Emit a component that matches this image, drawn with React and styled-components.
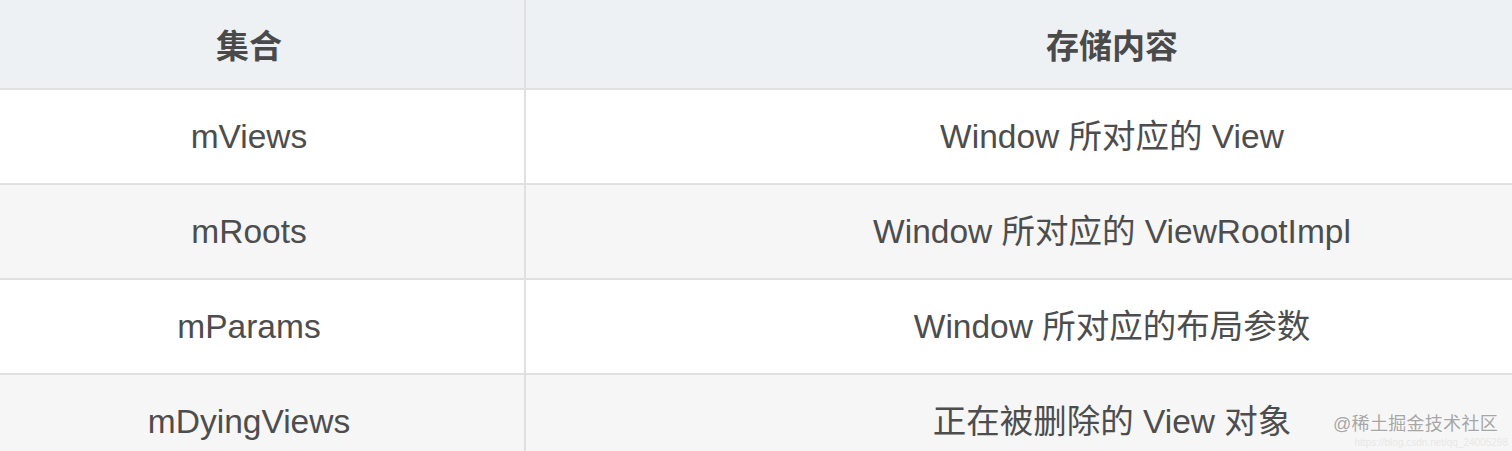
import React from 'react'
import styled, { createGlobalStyle } from 'styled-components'

const GlobalStyle = createGlobalStyle`
  body {
    margin: 0;
    background: #ffffff;
  }
`

const rows = [
  { name: 'mViews', content: 'Window 所对应的 View' },
  { name: 'mRoots', content: 'Window 所对应的 ViewRootImpl' },
  { name: 'mParams', content: 'Window 所对应的布局参数' },
  { name: 'mDyingViews', content: '正在被删除的 View 对象' },
]

const Frame = styled.div`
  position: relative;
  width: 1512px;
  height: 451px;
  overflow: hidden;
  font-family: "Liberation Sans", "Noto Sans CJK SC", sans-serif;
`

const Table = styled.div`
  display: grid;
  grid-template-columns: 550px 1172px;
  grid-auto-rows: 93px;
  grid-template-rows: 88px;
  gap: 2px;
  width: 1724px;
  margin-left: -26px;
  background: #e0e0e0;
`

const HeadCell = styled.div`
  display: flex;
  align-items: center;
  justify-content: center;
  padding-top: 6px;
  box-sizing: border-box;
  background: #eef1f4;
  color: #4a4a4a;
  font-size: 33px;
  line-height: 40px;
  font-weight: 700;
`

const Cell = styled.div`
  display: flex;
  align-items: center;
  justify-content: center;
  background: ${p => (p.$striped ? '#f6f6f6' : '#ffffff')};
  color: #4d4d4d;
  font-size: 33.5px;
  line-height: 40px;
`

const Watermark = styled.div`
  position: absolute;
  right: 14px;
  bottom: 2px;
  display: flex;
  flex-direction: column;
  align-items: flex-end;
  pointer-events: none;
`

const MarkTitle = styled.span`
  font-size: 18px;
  line-height: 22px;
  color: #a6a6a6;
  letter-spacing: 0.3px;
  text-shadow: 0 0 2px #ffffff;
`

const MarkUrl = styled.span`
  margin-top: 2px;
  margin-right: -10px;
  font-size: 10px;
  line-height: 12px;
  color: #e8e8e8;
`

const App = () => {
  return (
    <Frame>
      <GlobalStyle />
      <Table>
        <HeadCell>集合</HeadCell>
        <HeadCell>存储内容</HeadCell>
        {rows.map((row, i) => (
          <React.Fragment key={row.name}>
            <Cell $striped={i % 2 === 1}>{row.name}</Cell>
            <Cell $striped={i % 2 === 1}>{row.content}</Cell>
          </React.Fragment>
        ))}
      </Table>
      <Watermark>
        <MarkTitle>@稀土掘金技术社区</MarkTitle>
        <MarkUrl>https://blog.csdn.net/qq_24005298</MarkUrl>
      </Watermark>
    </Frame>
  )
}

export default App
